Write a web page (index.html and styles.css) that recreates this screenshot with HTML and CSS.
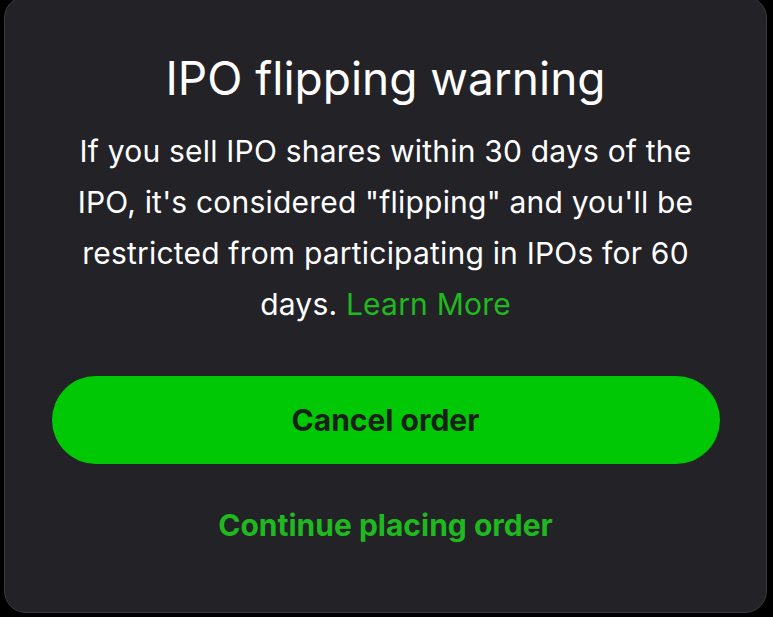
FILE: index.html
```html
<!DOCTYPE html>
<html lang="en">
<head>
<meta charset="utf-8">
<link rel="stylesheet" href="styles.css">
</head>
<body>
<div class="dialog">
  <h1 class="title">IPO flipping warning</h1>
  <p class="message">If you sell IPO shares within 30 days of the IPO, it's considered "flipping" and you'll be restricted from participating in IPOs for 60 days. <a class="link">Learn More</a></p>
  <button class="btn-primary">Cancel order</button>
  <button class="btn-text">Continue placing order</button>
</div>
</body>
</html>
```

FILE: styles.css
```css
html, body {
  margin: 0;
  padding: 0;
  background: #000;
}
body {
  font-family: Inter, "Noto Sans", sans-serif;
  width: 773px;
  height: 617px;
  overflow: hidden;
}
.dialog {
  box-sizing: border-box;
  margin: -4px 0 0 4px;
  width: 763px;
  height: 617px;
  background: #232227;
  border: 1px solid #3a393e;
  border-radius: 22px;
  display: flex;
  flex-direction: column;
  align-items: center;
  padding-top: 53px;
}
.title {
  margin: 0;
  font-size: 46px;
  line-height: 56px;
  font-weight: 400;
  color: #fff;
}
.message {
  margin: 20px 0 0;
  width: 650px;
  text-align: center;
  font-size: 30px;
  line-height: 51px;
  letter-spacing: 0.2px;
  color: #fff;
}
.link {
  color: #1fb91f;
}
.btn-primary {
  margin-top: 46px;
  width: 668px;
  height: 88px;
  border: none;
  border-radius: 44px;
  background: #00c805;
  color: #1a1f1a;
  font-family: inherit;
  font-size: 30px;
  font-weight: 700;
}
.btn-text {
  margin-top: 41px;
  border: none;
  background: none;
  padding: 0;
  height: 40px;
  color: #1fb91f;
  font-family: inherit;
  font-size: 30px;
  font-weight: 700;
}
```
